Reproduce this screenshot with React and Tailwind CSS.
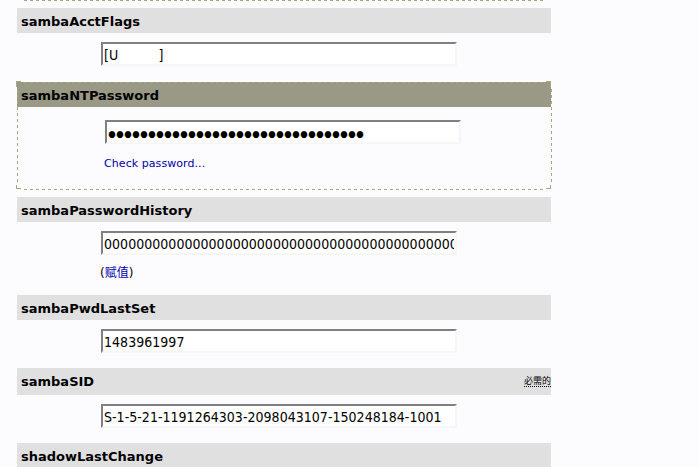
import React from 'react';

const SANS = "font-['DejaVu_Sans','Noto_Sans_CJK_SC',sans-serif]";

function Heading({ children, size = 'h-[25px] pt-px', color = 'bg-[#e0e0e0]', spacing = '', note }) {
  return (
    <div className={`flex w-[534px] shrink-0 items-center justify-between pl-1 ${size} ${color} ${spacing}`}>
      <span className="whitespace-nowrap text-[13px] font-bold leading-none text-black">{children}</span>
      {note}
    </div>
  );
}

function Field({ children, className = '' }) {
  return (
    <div className={`flex h-6 w-[356px] shrink-0 border-2 border-b-[#f6f6f7] border-l-[#808080] border-r-[#f6f6f7] border-t-[#808080] bg-white px-px ${className}`}>
      <div className="flex min-w-0 flex-1 items-center overflow-hidden pt-[2px]">
        <span className="whitespace-pre font-['DejaVu_Sans_Condensed','DejaVu_Sans',sans-serif] text-[14px] leading-none tracking-[0.03px] text-black [font-stretch:condensed]">{children}</span>
      </div>
    </div>
  );
}

const H_DASH = 'h-px bg-[repeating-linear-gradient(90deg,#a5a882_0_3px,transparent_3px_6px)]';
const V_DASH = 'w-px bg-[repeating-linear-gradient(180deg,#a5a882_0_3px,transparent_3px_6px)]';

export default function App() {
  return (
    <div className={`h-[467px] w-[699px] overflow-hidden bg-[#fcfcff] pl-[17px] ${SANS}`}>
      <div className={`ml-[7px] w-[519px] ${H_DASH}`} />
      <Heading spacing="mt-[7px]">sambaAcctFlags</Heading>
      <Field className="ml-[84px] mt-[9px]">{'[U' + ' '.repeat(10) + ']'}</Field>

      <div className="relative mt-4 h-[108px] w-[535px]">
        <Heading color="bg-[#999985]">sambaNTPassword</Heading>
        <Field className="ml-[88px] mt-[13px]">
          <span className="flex pt-[2px]">
            {Array.from({ length: 32 }, (_, i) => (
              <span key={i} className="flex w-2 shrink-0 justify-center text-[9.5px] leading-[12px]">●</span>
            ))}
          </span>
        </Field>
        <div className="ml-[87px] mt-[14px] text-[11px] leading-3 tracking-[0.07px] text-[#0000aa]">Check password...</div>
        <div className={`absolute left-[7px] top-0 w-[519px] ${H_DASH}`} />
        <div className={`absolute bottom-0 left-[7px] w-[519px] ${H_DASH}`} />
        <div className={`absolute left-0 top-[7px] h-[96px] ${V_DASH}`} />
        <div className={`absolute right-0 top-[7px] h-[96px] ${V_DASH}`} />
        <div className="absolute -left-px -top-px h-1.5 w-[5px] border-l border-t border-[#a5a882] bg-[#999985]" />
        <div className="absolute -top-px right-px h-1.5 w-[5px] border-r border-t border-[#a5a882]" />
        <div className="absolute -left-px bottom-px h-1 w-[5px] border-b border-l border-[#a5a882]" />
        <div className="absolute bottom-px right-px h-1 w-[5px] border-b border-r border-[#a5a882]" />
      </div>

      <Heading spacing="mt-[7px]">sambaPasswordHistory</Heading>
      <Field className="ml-[84px] mt-[9px]">{'0'.repeat(44)}</Field>
      <div className="ml-[83px] mt-[10px] h-4 text-[12px] leading-4 text-black">
        (<span className="text-[#0000aa]">赋值</span>)
      </div>

      <Heading spacing="mt-[14px]">sambaPwdLastSet</Heading>
      <Field className="ml-[84px] mt-[9px]">1483961997</Field>
      <Heading
        size="h-[27px]"
        spacing="mt-[15px]"
        note={<span className="border-b border-dotted border-black text-[9px] leading-[9px] text-black">必需的</span>}
      >
        sambaSID
      </Heading>
      <Field className="ml-[84px] mt-[9px]">S-1-5-21-1191264303-2098043107-150248184-1001</Field>
      <Heading size="h-[27px]" spacing="mt-[15px]">shadowLastChange</Heading>
    </div>
  );
}
